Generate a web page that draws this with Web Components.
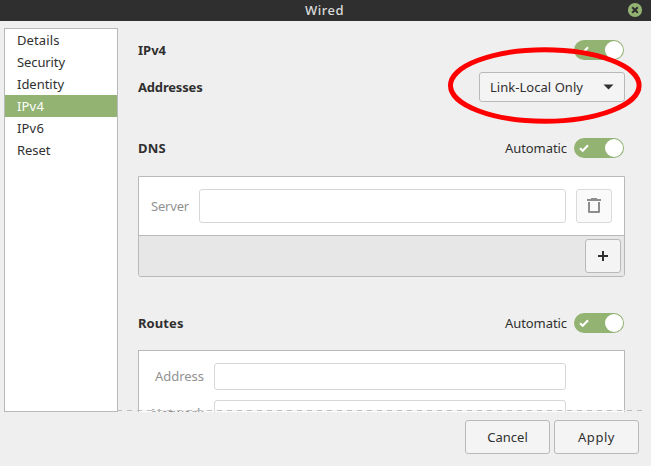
<!DOCTYPE html>
<html lang="en">
<head>
<meta charset="utf-8">
<title>Wired</title>
<style>
html,body{margin:0;height:100%;overflow:hidden;background:#efefef}
body{font:13px/22px "Noto Sans","Open Sans",sans-serif;color:#303030}
</style>
</head>
<body>
<network-dialog></network-dialog>
<script>
const define = (name, html, setup) => customElements.define(name, class extends HTMLElement {
  connectedCallback() {
    if (this.shadowRoot) return;
    const t = document.createElement('template');
    t.innerHTML = '<style>*{box-sizing:border-box}:host{box-sizing:border-box}</style>' + html;
    this.attachShadow({mode: 'open'}).append(t.content.cloneNode(true));
    if (setup) setup(this);
  }
});

// Label whose letter spacing adapts so the text spans the width in its "w" attribute.
define('ui-label', `<style>
:host{display:block;flex:none;white-space:nowrap}
:host([bold]){font-weight:700}
:host([dim]){color:#919191}
span{display:inline-block;white-space:nowrap}
</style><span></span>`, el => {
  const s = el.shadowRoot.querySelector('span');
  s.textContent = el.getAttribute('text');
  const w = +el.getAttribute('w');
  el.style.width = w + 'px';
  const natural = s.getBoundingClientRect().width;
  s.style.letterSpacing = ((w - natural) / s.textContent.length).toFixed(3) + 'px';
});

define('title-bar', `<style>
:host{display:grid;grid-template-columns:1fr auto 1fr;align-items:center;height:21px;background:#2f2f2f;color:#dadada;font-weight:500}
ui-label{line-height:20px;margin:-1px 2px 0 0}
svg{justify-self:end;margin:-2px 8px 0 0;display:block}
</style><i></i><ui-label text="Wired" w="39"></ui-label>
<svg width="16" height="16" viewBox="0 0 16 16"><circle cx="8" cy="8" r="7.1" fill="#92b372"/><path d="M5.2 5.2l5.6 5.6M10.8 5.2l-5.6 5.6" stroke="#2f2f2f" stroke-width="2"/></svg>`);

define('nav-item', `<style>
:host{display:block;height:22px;padding-left:12px}
:host([selected]){background:#92b372;color:#fff}
</style><slot></slot>`);

define('side-nav', `<style>
:host{display:block;width:114px;height:384px;background:#fff;border:1px solid #b9b9b9}
</style><slot></slot>`);

define('toggle-switch', `<style>
:host{display:flex;flex:none;align-items:center;justify-content:space-between;width:50px;height:20px;border-radius:10px;background:#92b372;padding:0 1px 0 5px}
i{width:18px;height:18px;border-radius:50%;background:#fff}
</style><svg width="10" height="10" viewBox="0 0 10 10"><path d="M1 5.2L3.7 7.8L9 2.3" fill="none" stroke="#fff" stroke-width="2.1"/></svg><i></i>`);

define('setting-row', `<style>
:host{display:flex;align-items:center;height:20px;padding-right:1px}
</style><slot name="title"></slot><slot></slot>`);

define('push-button', `<style>
:host{display:flex;flex:none;align-items:center;justify-content:center;width:85px;height:34px;border:1px solid #b9b9b9;border-radius:3px;background:#f4f4f4}
:host([icon]){width:36px}
:host([faint]){border-color:#dadada;background:#fafafa}
</style><slot></slot>`);

define('combo-box', `<style>
:host{display:flex;flex:none;align-items:center;justify-content:space-between;width:146px;height:30px;padding:0 10px;border:1px solid #b9b9b9;border-radius:3px;background:#f4f4f4}
</style><slot></slot><svg width="11" height="6" viewBox="0 0 11 6"><path d="M.5.5h10L5.5 5.5z" fill="#303030"/></svg>`);

define('text-entry', `<style>
:host{display:block;flex:1;height:34px;border:1px solid #d7d7d7;border-radius:3px;background:#fff}
:host([compact]){height:27px}
</style>`);

define('dns-panel', `<style>
:host{display:block;height:101px;border:1px solid #b9b9b9;border-radius:0 0 3px 3px;background:#fff;overflow:hidden}
.row{display:flex;align-items:center;height:58px;padding:0 12px}
text-entry{margin:0 10px}
.bar{display:flex;justify-content:flex-end;align-items:center;height:41px;padding:0 3px;border-top:1px solid #b9b9b9;background:#e7e7e7}
svg{display:block}
</style>
<div class="row"><ui-label dim text="Server" w="38"></ui-label><text-entry></text-entry>
<push-button icon faint><svg width="14" height="16" viewBox="0 0 14 16"><path d="M0 1h4V0h6v1h4v2H0z" fill="#8d8d8d"/><path d="M2 4v10h10V4" fill="none" stroke="#8d8d8d" stroke-width="2" stroke-linejoin="round"/></svg></push-button></div>
<div class="bar"><push-button icon><svg width="10" height="10" viewBox="0 0 10 10"><path d="M0 5h10M5 0v10" stroke="#303030" stroke-width="2"/></svg></push-button></div>`);

define('routes-panel', `<style>
:host{display:block;height:140px;border:1px solid #b9b9b9;background:#fff;padding:12px 58px 0 12px}
.row{display:flex;align-items:center;height:27px;margin-bottom:10px}
.cap{display:flex;justify-content:flex-end;width:53px;margin-right:10px;padding-bottom:2px}
</style>
<div class="row"><div class="cap"><ui-label dim text="Address" w="49"></ui-label></div><text-entry compact></text-entry></div>
<div class="row"><div class="cap"><ui-label dim text="Network" w="53"></ui-label></div><text-entry compact></text-entry></div>`);

define('scroll-page', `<style>
:host{display:block;position:relative;flex:1;height:391px;margin-right:9px;padding:19px 17px 0 20px;overflow:hidden}
/* undershoot hint drawn over the clipped content */
:host::after{content:"";position:absolute;left:0;right:0;bottom:1px;height:1px;background:repeating-linear-gradient(90deg,#bdbdbd 0 4px,#efefef 4px 9px,#bdbdbd 9px 10px)}
.address{display:flex;justify-content:space-between;align-items:center;height:30px;margin-top:12px}
.dns{margin-top:36px}
dns-panel{margin-top:18px}
.routes{margin-top:36px}
routes-panel{margin-top:17px}
.auto{margin-right:7px}
setting-row ui-label[slot]{margin-right:auto}
</style>
<setting-row><ui-label slot="title" bold text="IPv4" w="28"></ui-label><toggle-switch></toggle-switch></setting-row>
<div class="address"><ui-label bold text="Addresses" w="64.5"></ui-label><combo-box><ui-label text="Link-Local Only" w="93"></ui-label></combo-box></div>
<setting-row class="dns"><ui-label slot="title" bold text="DNS" w="28"></ui-label><ui-label class="auto" text="Automatic" w="62"></ui-label><toggle-switch></toggle-switch></setting-row>
<dns-panel></dns-panel>
<setting-row class="routes"><ui-label slot="title" bold text="Routes" w="45.5"></ui-label><ui-label class="auto" text="Automatic" w="62"></ui-label><toggle-switch></toggle-switch></setting-row>
<routes-panel></routes-panel>`);

define('highlight-ring', `<style>
:host{display:block;position:absolute;left:447px;top:46px}
svg{display:block}
</style><svg width="196" height="80"><ellipse cx="97.8" cy="39.5" rx="94.3" ry="35.7" fill="none" stroke="#f00" stroke-width="5"/></svg>`);

define('network-dialog', `<style>
:host{display:block;position:relative;width:651px;height:466px;background:#efefef;overflow:hidden}
.body{display:flex}
side-nav{margin:7px 0 0 4px}
.actions{display:flex;justify-content:flex-end;gap:4px;padding:8px 12px 0 0}
</style>
<title-bar></title-bar>
<div class="body">
<side-nav>
<nav-item><ui-label text="Details" w="42.5"></ui-label></nav-item>
<nav-item><ui-label text="Security" w="48"></ui-label></nav-item>
<nav-item><ui-label text="Identity" w="47"></ui-label></nav-item>
<nav-item selected><ui-label text="IPv4" w="27"></ui-label></nav-item>
<nav-item><ui-label text="IPv6" w="27"></ui-label></nav-item>
<nav-item><ui-label text="Reset" w="33.5"></ui-label></nav-item>
</side-nav>
<scroll-page></scroll-page>
</div>
<div class="actions"><push-button><ui-label text="Cancel" w="40.5"></ui-label></push-button><push-button><ui-label text="Apply" w="37"></ui-label></push-button></div>
<highlight-ring></highlight-ring>`);
</script>
</body>
</html>
